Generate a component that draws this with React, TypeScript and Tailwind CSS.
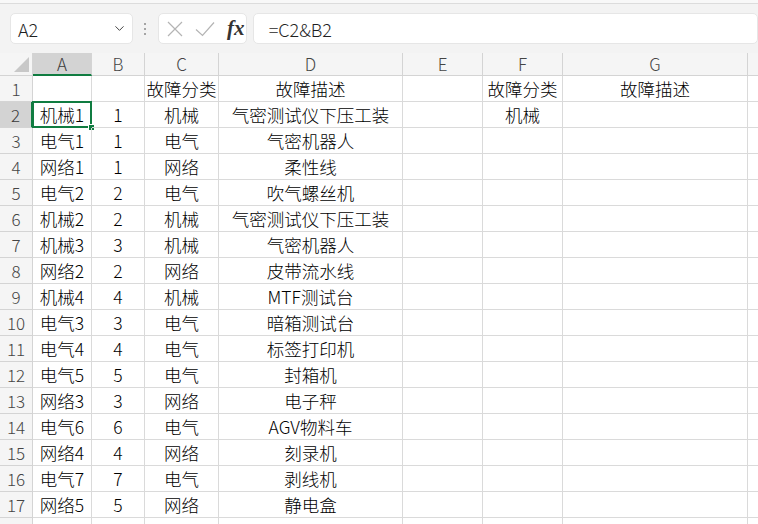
import { ChevronDown } from "lucide-react";

const COLS = ["A", "B", "C", "D", "E", "F", "G", ""];

const ROWS: string[][] = [
  ["", "", "故障分类", "故障描述", "", "故障分类", "故障描述", ""],
  ["机械1", "1", "机械", "气密测试仪下压工装", "", "机械", "", ""],
  ["电气1", "1", "电气", "气密机器人", "", "", "", ""],
  ["网络1", "1", "网络", "柔性线", "", "", "", ""],
  ["电气2", "2", "电气", "吹气螺丝机", "", "", "", ""],
  ["机械2", "2", "机械", "气密测试仪下压工装", "", "", "", ""],
  ["机械3", "3", "机械", "气密机器人", "", "", "", ""],
  ["网络2", "2", "网络", "皮带流水线", "", "", "", ""],
  ["机械4", "4", "机械", "MTF测试台", "", "", "", ""],
  ["电气3", "3", "电气", "暗箱测试台", "", "", "", ""],
  ["电气4", "4", "电气", "标签打印机", "", "", "", ""],
  ["电气5", "5", "电气", "封箱机", "", "", "", ""],
  ["网络3", "3", "网络", "电子秤", "", "", "", ""],
  ["电气6", "6", "电气", "AGV物料车", "", "", "", ""],
  ["网络4", "4", "网络", "刻录机", "", "", "", ""],
  ["电气7", "7", "电气", "剥线机", "", "", "", ""],
  ["网络5", "5", "网络", "静电盒", "", "", "", ""],
  ["", "", "", "", "", "", "", ""],
];

const GRID = "grid grid-cols-[33px_59px_53px_74px_184px_80px_80px_185px_40px]";

function FormulaBar() {
  return (
    <div className="mt-[3px] flex h-[50px] items-start border-t border-[#dcdcdc] bg-[#f3f3f3] pt-[9px]">
      <div className="ml-[10px] flex h-[31px] w-[126px] items-center justify-between rounded-[5px] border border-[#e6e6e6] bg-white pl-[7px] pr-[5px]">
        <span className="text-[18px] font-light leading-[22px] text-[#1f1f1f]">A2</span>
        <ChevronDown size={15} strokeWidth={1.6} className="text-[#444]" />
      </div>
      <div className="flex h-[31px] w-[26px] flex-col items-center justify-center gap-[3px]">
        <span className="h-[2px] w-[2px] rounded-full bg-[#8a8a8a]" />
        <span className="h-[2px] w-[2px] rounded-full bg-[#8a8a8a]" />
        <span className="h-[2px] w-[2px] rounded-full bg-[#8a8a8a]" />
      </div>
      <div className="flex h-[31px] w-[91px] items-center rounded-[5px] border border-[#e6e6e6] bg-white pl-[8px]">
        <svg width="16" height="16" viewBox="0 0 16 16" fill="none" stroke="#b4b4b4" strokeWidth="1.2">
          <path d="M1 1L15 15M15 1L1 15" />
        </svg>
        <svg width="20" height="16" viewBox="0 0 20 16" fill="none" stroke="#b4b4b4" strokeWidth="1.2" className="ml-[12px]">
          <path d="M1 8.5L7.5 14.5L19 1.5" />
        </svg>
        <span className="ml-[12px] font-['Liberation_Serif',serif] text-[21px] font-bold italic leading-none text-[#333]">
          fx
        </span>
      </div>
      <div className="ml-[6px] flex h-[31px] w-[520px] items-center rounded-[5px] border border-[#e6e6e6] bg-white pl-[15px]">
        <span className="text-[18px] font-light leading-[22px] text-[#1f1f1f]">=C2&amp;B2</span>
      </div>
    </div>
  );
}

function HeaderRow() {
  return (
    <div className={`${GRID} h-[23px] bg-[#f5f5f5]`}>
      <div className="relative border-b border-r border-[#d4d4d4]">
        <div className="absolute bottom-[3px] right-[3px] h-0 w-0 border-b-[15px] border-l-[15px] border-b-[#c8c8c8] border-l-transparent" />
      </div>
      {COLS.map((c, i) => (
        <div
          key={i}
          className={
            i === 0
              ? "flex items-center justify-center border-b-2 border-r border-b-[#107c41] border-r-[#d4d4d4] bg-[#d3d3d3] text-[17px] font-light leading-[20px] text-[#3a3a3a]"
              : "flex items-center justify-center border-b border-r border-[#d4d4d4] text-[17px] font-light leading-[20px] text-[#444]"
          }
        >
          {c}
        </div>
      ))}
    </div>
  );
}

export default function App() {
  return (
    <div className="h-[524px] w-[758px] overflow-hidden bg-[#f8f8f8] font-['Noto_Sans_CJK_SC',sans-serif] text-black">
      <FormulaBar />
      <HeaderRow />
      <div className="bg-white">
        {ROWS.map((row, r) => (
          <div key={r} className={`${GRID} h-[26px]`}>
            <div
              className={
                r === 1
                  ? "flex items-end justify-center border-b border-r-2 border-b-[#d4d4d4] border-r-[#107c41] bg-[#d3d3d3] pb-[2px] text-[17px] font-light leading-[20px] text-[#3a3a3a]"
                  : "flex items-end justify-center border-b border-r border-[#d4d4d4] bg-[#f5f5f5] pb-[2px] text-[17px] font-light leading-[20px] text-[#444]"
              }
            >
              {r < 17 ? r + 1 : ""}
            </div>
            {row.map((v, c) => (
              <div
                key={c}
                className="relative flex items-center justify-center whitespace-nowrap border-b border-r border-[#dadada] text-[17.5px] font-light leading-[20px]"
              >
                {v}
                {r === 1 && c === 0 && (
                  <>
                    <div className="pointer-events-none absolute -left-[1px] -top-[1px] bottom-[-1px] right-[-1px] border-2 border-[#107c41]" />
                    <div className="absolute -bottom-[4px] -right-[4px] h-[7px] w-[7px] border border-white bg-[#107c41]" />
                  </>
                )}
              </div>
            ))}
          </div>
        ))}
      </div>
    </div>
  );
}
